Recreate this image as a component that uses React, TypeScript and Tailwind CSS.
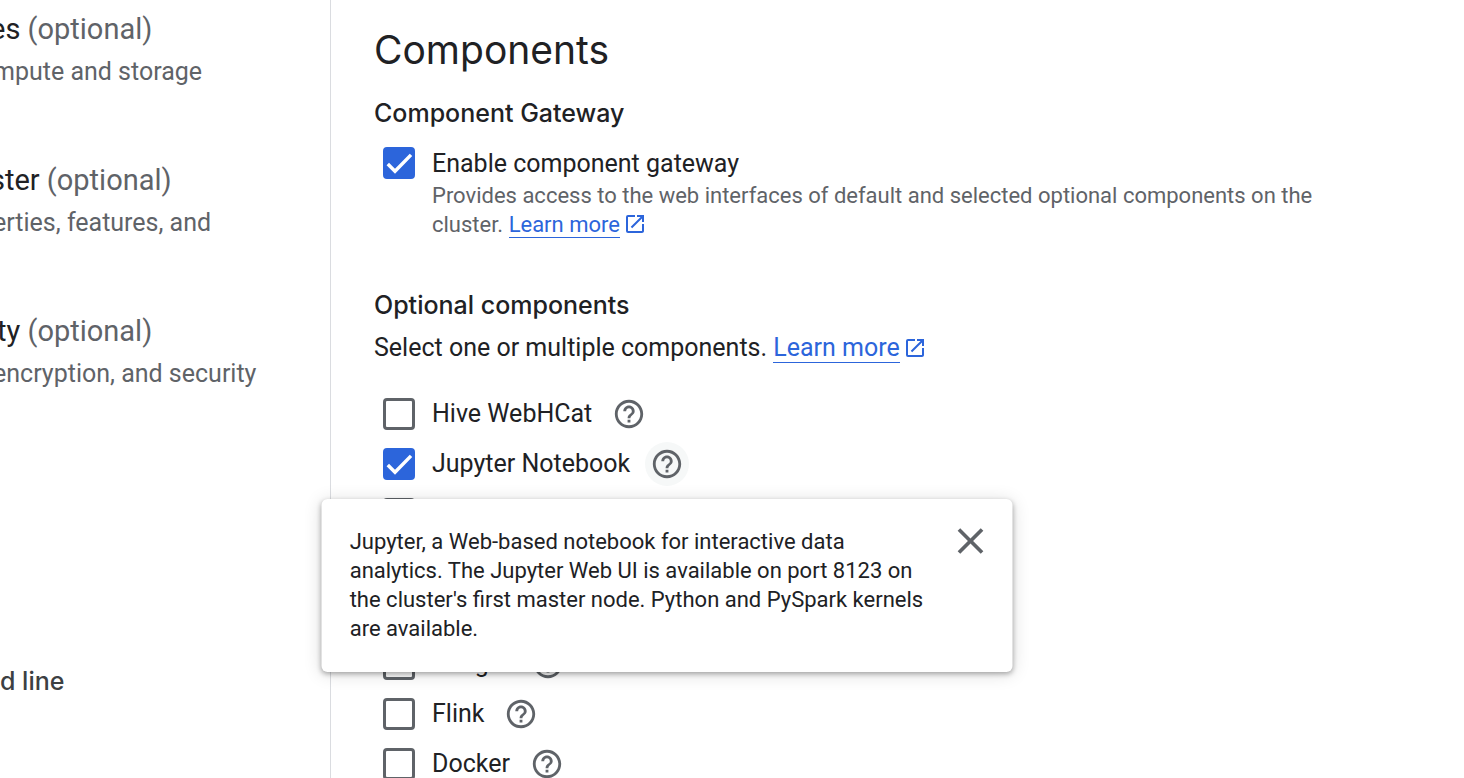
import type { ReactNode } from 'react'
import { MdClose, MdHelpOutline, MdOpenInNew } from 'react-icons/md'

const STEPS = [
  { title: 'es', description: 'mpute and storage' },
  { title: 'ster', description: 'erties, features, and' },
  { title: 'ity', description: 'encryption, and security' },
]

const COMPONENTS = [
  { id: 'hive-webhcat', label: 'Hive WebHCat' },
  {
    id: 'jupyter',
    label: 'Jupyter Notebook',
    checked: true,
    help: "Jupyter, a Web-based notebook for interactive data analytics. The Jupyter Web UI is available on port 8123 on the cluster's first master node. Python and PySpark kernels are available.",
  },
  { id: 'zeppelin', label: 'Zeppelin' },
  { id: 'trino', label: 'Trino' },
  { id: 'zookeeper', label: 'ZooKeeper' },
  { id: 'ranger', label: 'Ranger' },
  { id: 'flink', label: 'Flink' },
  { id: 'docker', label: 'Docker' },
]

function Checkbox({ id, checked = false }: { id: string; checked?: boolean }) {
  return (
    <span className="relative flex h-8 w-8 shrink-0">
      <input
        id={id}
        type="checkbox"
        defaultChecked={checked}
        className="peer h-8 w-8 appearance-none rounded-[4px] border-3 border-[#5f6368] bg-white checked:border-[#2c65db] checked:bg-[#2c65db]"
      />
      <svg
        viewBox="0 0 24 24"
        fill="none"
        stroke="white"
        strokeWidth="2.6"
        className="pointer-events-none absolute inset-0 hidden h-8 w-8 peer-checked:block"
        aria-hidden="true"
      >
        <path d="M3.6 12.8 9 18.2 21 5.9" />
      </svg>
    </span>
  )
}

function ExternalLink({ children }: { children: ReactNode }) {
  return (
    <a href="#learn-more" className="whitespace-nowrap text-[#2c65db]">
      <span className="border-b border-[#2c65db]">{children}</span>
      <MdOpenInNew className="ml-[3px] inline-block h-6 w-6 align-[-4px]" />
    </a>
  )
}

function HelpPopover({ text }: { text: string }) {
  return (
    <div
      role="dialog"
      aria-label="Component details"
      className="absolute top-full left-1/2 z-10 mt-[13px] flex w-[691px] -translate-x-1/2 items-start justify-between rounded-md bg-white px-7 pt-7 pb-[29px] shadow-[0_2px_5px_rgba(0,0,0,0.3),0_2px_18px_rgba(0,0,0,0.14)]"
    >
      <p className="w-[580px] text-[22px] leading-[29px] text-[#202124]">{text}</p>
      <button type="button" aria-label="Close" className="-mr-2 -mt-2 text-[#5f6368]">
        <MdClose className="h-11 w-11" />
      </button>
    </div>
  )
}

export default function App() {
  return (
    <div className="flex h-screen overflow-hidden bg-white font-['Roboto',sans-serif] text-[25px] text-[#202124]">
      <nav className="w-[331px] shrink-0 overflow-hidden border-r border-[#dadce0] pt-2 whitespace-nowrap">
        <ol className="flex flex-col gap-[65px]">
          {STEPS.map((step) => (
            <li key={step.title}>
              <p className="-ml-[10px] text-[29px] leading-[42px] text-[#5f6368]">
                <span className="text-[#202124]">{step.title}</span> (optional)
              </p>
              <p className="-ml-[7px] leading-[44px] text-[#5f6368]">{step.description}</p>
            </li>
          ))}
        </ol>
        <a
          href="#command-line"
          className="mt-[264px] block font-['Inter',sans-serif] text-[25px] leading-[42px] font-medium text-[#3c4043]"
        >
          d line
        </a>
      </nav>

      <main className="min-w-0 flex-1 pt-[26px] pr-[120px] pl-[43px]">
        <h1 className="font-['Inter',sans-serif] text-[39px] leading-[48px]">Components</h1>

        <section className="mt-[21px]">
          <h2 className="font-['Inter',sans-serif] text-[25px] leading-9 font-medium">Component Gateway</h2>
          <div className="mt-4 flex gap-[17px] pl-[9px]">
            <Checkbox id="gateway" checked />
            <div className="max-w-[890px]">
              <label htmlFor="gateway" className="block leading-[34px]">
                Enable component gateway
              </label>
              <p className="text-[22px] leading-[29px] text-[#5f6368]">
                Provides access to the web interfaces of default and selected optional components on the cluster.{' '}
                <ExternalLink>Learn more</ExternalLink>
              </p>
            </div>
          </div>
        </section>

        <section className="mt-12">
          <h2 className="font-['Inter',sans-serif] text-[25px] leading-9 font-medium">Optional components</h2>
          <p className="mt-[7px] leading-9">
            Select one or multiple components. <ExternalLink>Learn more</ExternalLink>
          </p>
          <ul className="mt-[23px]">
            {COMPONENTS.map((item) => (
              <li key={item.id} className="flex h-[50px] items-center pl-[9px]">
                <Checkbox id={item.id} checked={item.checked} />
                <label htmlFor={item.id} className="ml-[17px] leading-8">
                  {item.label}
                </label>
                <div className="relative ml-[15px]">
                  <button
                    type="button"
                    aria-label={`About ${item.label}`}
                    className={`flex h-11 w-11 items-center justify-center rounded-full text-[#5f6368] ${item.help ? 'bg-[#f6f8f8]' : ''}`}
                  >
                    <MdHelpOutline className="h-[34px] w-[34px]" />
                  </button>
                  {item.help ? <HelpPopover text={item.help} /> : null}
                </div>
              </li>
            ))}
          </ul>
        </section>
      </main>
    </div>
  )
}
